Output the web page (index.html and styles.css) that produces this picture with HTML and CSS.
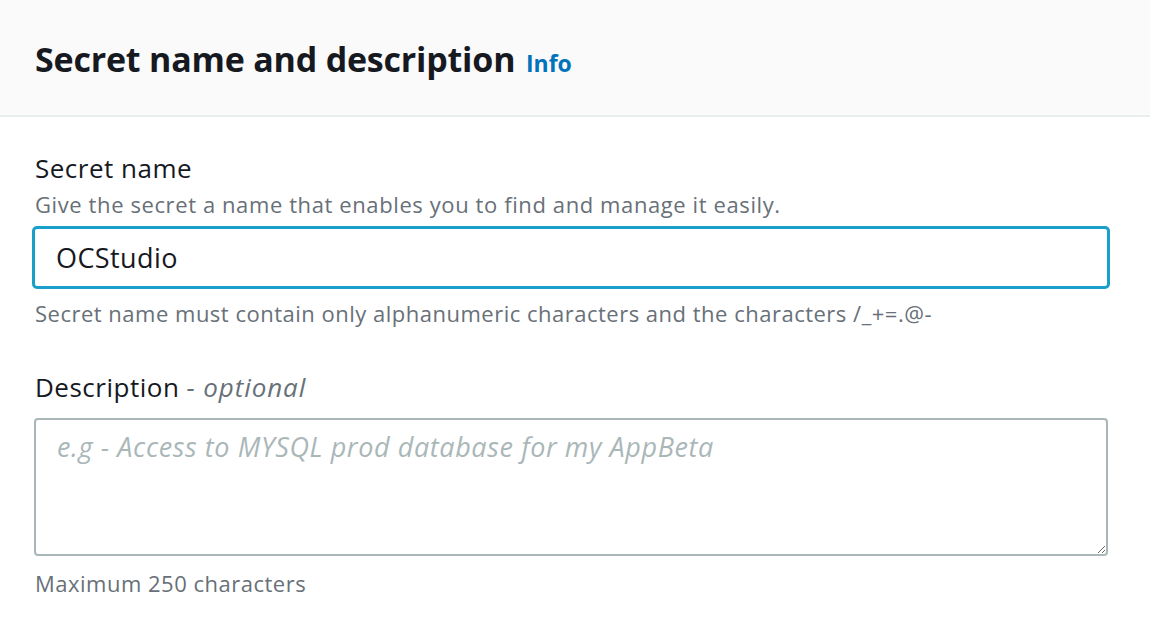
FILE: index.html
```html
<!DOCTYPE html>
<html lang="en">
<head>
<meta charset="utf-8">
<title>Secret name and description</title>
<link rel="stylesheet" href="styles.css">
</head>
<body>
<div class="panel">
  <div class="panel-header">
    <h2 class="panel-title">Secret name and description <a class="info" href="#">Info</a></h2>
  </div>
  <div class="panel-body">
    <div class="field">
      <label class="label" for="name">Secret name</label>
      <div class="desc">Give the secret a name that enables you to find and manage it easily.</div>
      <input id="name" class="input" type="text" value="OCStudio">
      <div class="hint">Secret name must contain only alphanumeric characters and the characters /_+=.@-</div>
    </div>
    <div class="field field-desc">
      <label class="label" for="desc">Description <span class="optional">- optional</span></label>
      <textarea id="desc" class="textarea" placeholder="e.g - Access to MYSQL prod database for my AppBeta"></textarea>
      <div class="hint">Maximum 250 characters</div>
    </div>
  </div>
</div>
</body>
</html>
```

FILE: styles.css
```css
html, body {
  margin: 0;
  padding: 0;
  background: #ffffff;
}
body {
  font-family: "Open Sans", "Noto Sans", sans-serif;
  color: #16191f;
  width: 1150px;
  height: 630px;
  overflow: hidden;
}
.panel-header {
  background: #fafafa;
  border-bottom: 2px solid #eaeded;
  height: 117px;
  box-sizing: border-box;
  padding: 39px 35px 0;
}
.panel-title {
  margin: 0;
  font-size: 34px;
  font-weight: 700;
  letter-spacing: -0.2px;
  line-height: 40px;
  white-space: nowrap;
}
.info {
  color: #0073bb;
  font-size: 23px;
  font-weight: 700;
  text-decoration: none;
  letter-spacing: 0;
  margin-left: 2px;
}
.panel-body {
  padding: 33px 40px 0 35px;
}
.field {
  display: flex;
  flex-direction: column;
  align-items: flex-start;
}
.label {
  font-size: 26px;
  line-height: 36px;
  letter-spacing: 0.5px;
  color: #16191f;
}
.optional {
  color: #687078;
  font-style: italic;
  letter-spacing: 0.9px;
}
.desc {
  font-size: 22px;
  line-height: 28px;
  letter-spacing: 0.6px;
  color: #687078;
  margin-top: 4px;
  margin-bottom: 8px;
}
.input {
  box-sizing: border-box;
  height: 63px;
  margin: 0 0 0 -3px;
  width: 1078px;
  border: 3px solid #1a9fca;
  border-radius: 5px;
  padding: 0 22px 0 21px;
  font-family: inherit;
  font-size: 27px;
  letter-spacing: 0.4px;
  color: #16191f;
  outline: none;
}
.hint {
  font-size: 22px;
  line-height: 30px;
  letter-spacing: 0.5px;
  color: #687078;
  margin-top: 9px;
}
.field-desc {
  margin-top: 41px;
}
.field-desc .label {
  margin-bottom: 13px;
}
.textarea {
  box-sizing: border-box;
  height: 138px;
  margin: 0 0 0 -1px;
  width: 1074px;
  border: 2px solid #aab7b8;
  border-radius: 4px;
  padding: 9px 21px;
  font-family: inherit;
  font-size: 27px;
  line-height: 36px;
  letter-spacing: 0.6px;
  color: #16191f;
  resize: vertical;
  outline: none;
}
.textarea::placeholder {
  color: #aab7b8;
  font-style: italic;
}
.field-desc .hint {
  margin-top: 12px;
}
```
